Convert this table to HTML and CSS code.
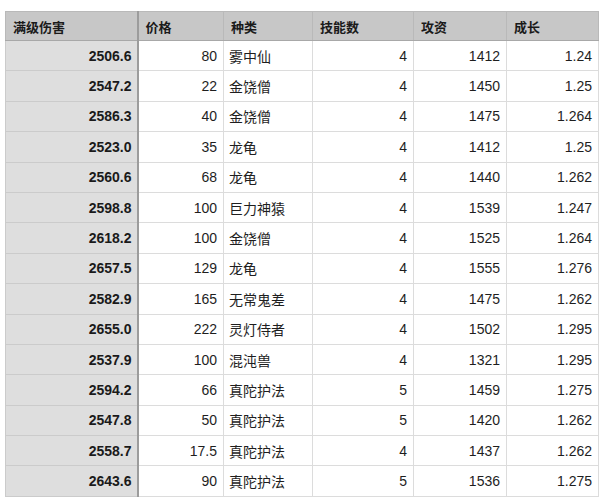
FILE: index.html
```html
<!DOCTYPE html>
<html lang="zh">
<head>
<meta charset="utf-8">
<link rel="stylesheet" href="styles.css">
</head>
<body>
<table class="grid">
  <colgroup>
    <col class="c1"><col class="c2"><col class="c3"><col class="c4"><col class="c5"><col class="c6">
  </colgroup>
  <thead>
    <tr><th>满级伤害</th><th>价格</th><th>种类</th><th>技能数</th><th>攻资</th><th>成长</th></tr>
  </thead>
  <tbody>
    <tr><td class="key">2506.6</td><td class="num">80</td><td class="txt">雾中仙</td><td class="num">4</td><td class="num">1412</td><td class="num">1.24</td></tr>
    <tr><td class="key">2547.2</td><td class="num">22</td><td class="txt">金饶僧</td><td class="num">4</td><td class="num">1450</td><td class="num">1.25</td></tr>
    <tr><td class="key">2586.3</td><td class="num">40</td><td class="txt">金饶僧</td><td class="num">4</td><td class="num">1475</td><td class="num">1.264</td></tr>
    <tr><td class="key">2523.0</td><td class="num">35</td><td class="txt">龙龟</td><td class="num">4</td><td class="num">1412</td><td class="num">1.25</td></tr>
    <tr><td class="key">2560.6</td><td class="num">68</td><td class="txt">龙龟</td><td class="num">4</td><td class="num">1440</td><td class="num">1.262</td></tr>
    <tr><td class="key">2598.8</td><td class="num">100</td><td class="txt">巨力神猿</td><td class="num">4</td><td class="num">1539</td><td class="num">1.247</td></tr>
    <tr><td class="key">2618.2</td><td class="num">100</td><td class="txt">金饶僧</td><td class="num">4</td><td class="num">1525</td><td class="num">1.264</td></tr>
    <tr><td class="key">2657.5</td><td class="num">129</td><td class="txt">龙龟</td><td class="num">4</td><td class="num">1555</td><td class="num">1.276</td></tr>
    <tr><td class="key">2582.9</td><td class="num">165</td><td class="txt">无常鬼差</td><td class="num">4</td><td class="num">1475</td><td class="num">1.262</td></tr>
    <tr><td class="key">2655.0</td><td class="num">222</td><td class="txt">灵灯侍者</td><td class="num">4</td><td class="num">1502</td><td class="num">1.295</td></tr>
    <tr><td class="key">2537.9</td><td class="num">100</td><td class="txt">混沌兽</td><td class="num">4</td><td class="num">1321</td><td class="num">1.295</td></tr>
    <tr><td class="key">2594.2</td><td class="num">66</td><td class="txt">真陀护法</td><td class="num">5</td><td class="num">1459</td><td class="num">1.275</td></tr>
    <tr><td class="key">2547.8</td><td class="num">50</td><td class="txt">真陀护法</td><td class="num">5</td><td class="num">1420</td><td class="num">1.262</td></tr>
    <tr><td class="key">2558.7</td><td class="num">17.5</td><td class="txt">真陀护法</td><td class="num">4</td><td class="num">1437</td><td class="num">1.262</td></tr>
    <tr><td class="key">2643.6</td><td class="num">90</td><td class="txt">真陀护法</td><td class="num">5</td><td class="num">1536</td><td class="num">1.275</td></tr>
  </tbody>
</table>
</body>
</html>
```

FILE: styles.css
```css
html, body {
  margin: 0;
  padding: 0;
  background: #ffffff;
}
body {
  padding: 11px 0 0 5px;
  font-family: "Liberation Sans", "Noto Sans CJK SC", sans-serif;
  font-size: 14px;
  color: #1e1e1e;
}
.grid {
  border-collapse: collapse;
  table-layout: fixed;
  width: 593px;
}
.c1 { width: 132px; }
.c2 { width: 86px; }
.c3 { width: 89px; }
.c4 { width: 101px; }
.c5 { width: 93px; }
.c6 { width: 92px; }

.grid th {
  height: 28px;
  padding: 0 7px;
  background: #c7c7c7;
  border: 1px solid #b9b9b9;
  border-bottom: 1px solid #a8a8a8;
  text-align: left;
  font-weight: bold;
  font-family: "Noto Sans CJK SC", "Liberation Sans", sans-serif;
  font-size: 13px;
  color: #1a1a1a;
}
.grid th:first-child {
  border-right: 2px solid #9c9c9c;
}
.grid td {
  height: 29.4px;
  padding: 0 6px;
  border: 1px solid #dcdcdc;
  background: #ffffff;
  white-space: nowrap;
}
.grid td.key {
  background: #dedede;
  font-weight: bold;
  text-align: right;
  padding-right: 5px;
  border-color: #cbcbcb;
  border-right: 2px solid #9c9c9c;
  color: #1a1a1a;
}
.grid td.num {
  text-align: right;
  padding-right: 6px;
}
.grid td.txt {
  font-family: "Noto Sans CJK SC", "Liberation Sans", sans-serif;
  font-size: 14px;
  text-align: left;
  padding-left: 5px;
}
```
